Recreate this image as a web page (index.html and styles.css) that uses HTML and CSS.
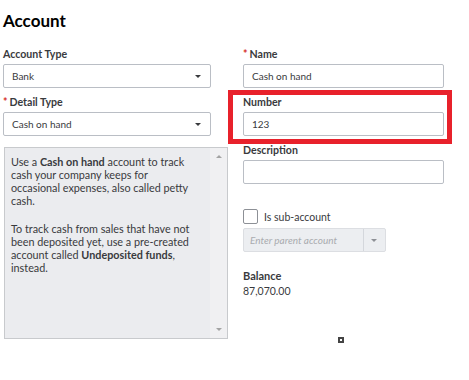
FILE: index.html
```html
<!DOCTYPE html>
<html lang="en">
<head>
<meta charset="UTF-8">
<title>Account</title>
<link rel="stylesheet" href="styles.css">
</head>
<body>
    <div class="page">
        <h1>Account</h1>
        <div class="form">
            <div class="col-left">
                <div class="field">
                    <label>Account Type</label>
                    <div class="select">
                        <span>Bank</span>
                        <span class="caret"></span>
                    </div>
                </div>
                <div class="field">
                    <label><span class="req">*</span>Detail Type</label>
                    <div class="select">
                        <span>Cash on hand</span>
                        <span class="caret"></span>
                    </div>
                </div>
                <div class="help-box">
                    <div class="help-text">
                        <p>Use a <b>Cash on hand</b> account to track cash your company keeps for occasional expenses, also called petty cash.</p>
                        <p>To track cash from sales that have not been deposited yet, use a pre-created account called <b>Undeposited funds</b>, instead.</p>
                    </div>
                    <div class="scroll">
                        <span class="arrow-up"></span>
                        <span class="arrow-down"></span>
                    </div>
                </div>
            </div>
            <div class="col-right">
                <div class="field">
                    <label><span class="req">*</span>Name</label>
                    <div class="input">Cash on hand</div>
                </div>
                <div class="field">
                    <label>Number</label>
                    <div class="input">123</div>
                </div>
                <div class="field">
                    <label>Description</label>
                    <div class="input"></div>
                </div>
                <div class="sub-account">
                    <span class="checkbox"></span>
                    <span>Is sub-account</span>
                </div>
                <div class="parent-combo">
                    <span class="placeholder">Enter parent account</span>
                    <span class="combo-btn"><span class="caret light"></span></span>
                </div>
                <div class="balance">
                    <div class="balance-label">Balance</div>
                    <div class="balance-value">87,070.00</div>
                </div>
            </div>
        </div>
    </div>
    <div class="highlight"></div>
    <div class="handle"></div>
</body>
</html>
```

FILE: styles.css
```css
body {
    margin: 0;
    background: #fff;
    font-family: Lato, "Open Sans", sans-serif;
    color: #393a3d;
}

.page {
    padding: 10px 0 0 3px;
}

h1 {
    margin: 0;
    font-size: 17px;
    line-height: 22px;
    font-weight: 700;
    color: #000;
}

.form {
    display: flex;
    gap: 15px;
    margin-top: 14px;
}

.col-left {
    width: 225px;
    display: flex;
    flex-direction: column;
}

.col-right {
    width: 201px;
    display: flex;
    flex-direction: column;
}

.field {
    display: flex;
    flex-direction: column;
    gap: 2px;
    margin-bottom: 6px;
}

label {
    font-size: 10.6px;
    font-weight: 700;
    line-height: 16px;
    color: #393a3d;
}

.req {
    color: #d52b1e;
    margin-right: 2px;
}

.select,
.input {
    box-sizing: border-box;
    height: 24px;
    border: 1px solid #babec5;
    border-radius: 2px;
    font-size: 10px;
    padding: 0 8px;
    display: flex;
    align-items: center;
    justify-content: space-between;
    background: #fff;
}

.select {
    width: 208px;
}

.caret {
    width: 0;
    height: 0;
    border-left: 3px solid transparent;
    border-right: 3px solid transparent;
    border-top: 3px solid #393a3d;
    margin-right: 1px;
}

.caret.light {
    border-top-color: #8d9096;
}

.help-box {
    box-sizing: border-box;
    margin-top: 5px;
    margin-left: 1px;
    width: 224px;
    height: 192px;
    border: 1px solid #c8cacd;
    background: #ebecef;
    display: flex;
}

.help-text {
    flex: 1;
    padding: 7px 14px 0 6px;
    font-size: 10.8px;
    line-height: 13px;
}

.help-text p {
    margin: 0 0 15px;
}

.scroll {
    width: 17px;
    background: #f0f0f2;
    display: flex;
    flex-direction: column;
    justify-content: space-between;
    align-items: center;
    padding: 7px 0;
}

.arrow-up {
    border-left: 3px solid transparent;
    border-right: 3px solid transparent;
    border-bottom: 3px solid #a3a3a3;
}

.arrow-down {
    border-left: 3px solid transparent;
    border-right: 3px solid transparent;
    border-top: 3px solid #a3a3a3;
}

.sub-account {
    display: flex;
    align-items: center;
    gap: 6px;
    margin-top: 19px;
    font-size: 10.5px;
    color: #393a3d;
}

.checkbox {
    box-sizing: border-box;
    width: 15px;
    height: 15px;
    border: 1px solid #8d9096;
    border-radius: 2px;
    background: #fff;
}

.parent-combo {
    box-sizing: border-box;
    margin-top: 4px;
    width: 143px;
    height: 24px;
    border: 1px solid #dcdee2;
    border-radius: 2px;
    background: #eceef1;
    display: flex;
}

.placeholder {
    flex: 1;
    display: flex;
    align-items: center;
    padding-left: 6px;
    font-size: 10px;
    font-style: italic;
    color: #a9abaf;
}

.combo-btn {
    width: 21px;
    border-left: 1px solid #d4d7dc;
    display: flex;
    align-items: center;
    justify-content: center;
}

.balance {
    margin-top: 16px;
}

.balance-label {
    font-size: 11px;
    font-weight: 700;
    line-height: 16px;
}

.balance-value {
    font-size: 10.5px;
    line-height: 14px;
}

.highlight {
    position: absolute;
    left: 228px;
    top: 90px;
    width: 214px;
    height: 44px;
    border: 5px solid #e8212b;
}

.handle {
    position: absolute;
    left: 338px;
    top: 337px;
    width: 2px;
    height: 2px;
    border: 2px solid #444;
}
```
